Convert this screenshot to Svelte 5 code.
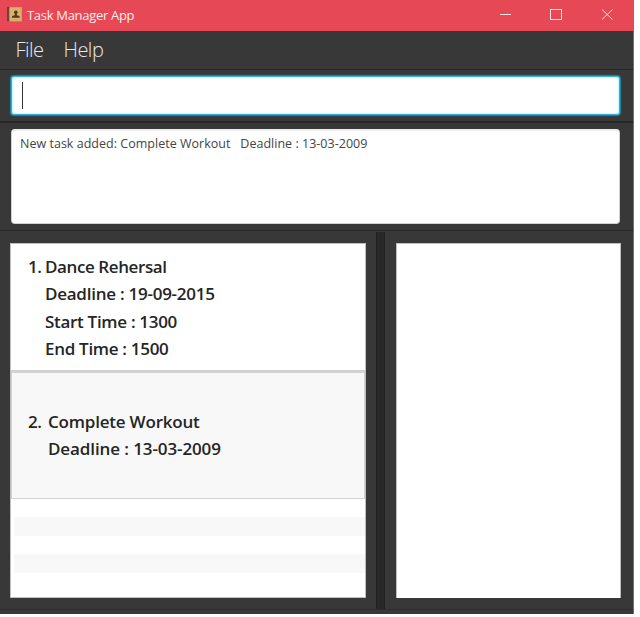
<script>
  const tasks = [
    { title: 'Dance Rehersal', details: ['Deadline : 19-09-2015', 'Start Time : 1300', 'End Time : 1500'] },
    { title: 'Complete Workout', details: ['Deadline : 13-03-2009'] }
  ];
</script>

<div class="window">
  <header>
    <svg class="logo" width="15" height="16" viewBox="0 0 15 16">
      <rect width="15" height="14.5" rx="1" fill="#d7a35c" />
      <rect width="2.5" height="14.5" fill="#684534" />
      <path d="M2.5 1H14V13.5H2.5Z" fill="#d8b16d" />
      <circle cx="8.8" cy="5.2" r="1.8" fill="#4d3b22" />
      <path d="M7.8 6H9.8V8.3L12.6 9V10.7H5V9L7.8 8.3Z" fill="#4d3b22" />
    </svg>
    <span class="app-title">Task Manager App</span>
    <svg class="controls" width="116" height="30" viewBox="0 0 116 30" fill="none" stroke="#ffe3e5" stroke-width="1">
      <path d="M0 14.5H11" />
      <rect x="50.5" y="9.5" width="11" height="10" />
      <path d="M102 9.5L112.5 19.5M112.5 9.5L102 19.5" />
    </svg>
  </header>
  <nav><span class="file">File</span><span class="help">Help</span></nav>
  <section class="command"><div class="input"><i></i></div></section>
  <section class="result"><div class="message"><span>New task added: Complete Workout &nbsp; Deadline : 13-03-2009</span></div></section>
  <main>
    <div class="left">
      <div class="list">
        {#each tasks as task, i}
          <article>
            <span class="number">{i + 1}.</span>
            <div class="lines">
              <div class="title">{task.title}</div>
              {#each task.details as line, j}<div class:deadline={j === 0}>{line}</div>{/each}
            </div>
          </article>
        {/each}
        <div class="stripes"></div>
      </div>
    </div>
    <div class="divider"></div>
    <div class="right"><div class="browser"></div></div>
  </main>
  <footer></footer>
</div>

<style>
  :global(body) { margin: 0; background: #fff; overflow: hidden; }
  .window { box-sizing: border-box; width: 634px; height: 614px; display: flex; flex-direction: column; background: #383838; border-right: 1px solid #b94d5c; font-family: 'Open Sans', 'Noto Sans', sans-serif; }
  header { height: 31px; flex: none; margin-right: -1px; display: flex; background: #e74856; color: #ffedee; }
  .logo { margin: 7px 0 0 7px; }
  .app-title { margin-left: 5px; font-size: 13px; line-height: 31px; width: 370px; letter-spacing: -0.3px; }
  .controls { margin-left: 103px; flex: none; }
  nav { box-sizing: border-box; height: 39px; flex: none; border-bottom: 1px solid #252525; display: flex; padding-left: 15.5px; font-size: 20px; font-weight: 300; line-height: 38px; letter-spacing: -0.5px; color: #e8e8e8; }
  .file { width: 48px; }
  .command { box-sizing: border-box; height: 53px; flex: none; padding: 6px 13px 6px 11px; border-bottom: 2px solid #262826; }
  .input { box-sizing: border-box; height: 39px; border: 1px solid #34b2dc; border-radius: 3px; background: #fff; box-shadow: 0 0 1px 1px #168bb0, inset 0 0 1px 1px #c6f1ff; padding: 5px 0 0 10px; }
  .input i { display: block; width: 1px; height: 27px; background: #333; }
  .result { box-sizing: border-box; height: 108px; flex: none; padding: 6px 13px 7px 11px; border-bottom: 1px solid #292929; }
  .message { box-sizing: border-box; height: 95px; background: #fff; border: 1px solid #d0d0d0; border-top: 2px solid #ededed; border-radius: 4px; padding: 2px 8px; font-size: 12.5px; line-height: 22px; color: #454545; white-space: nowrap; }
  .message span { letter-spacing: 0.02px; }
  main { height: 378px; flex: none; display: flex; }
  .left { width: 376px; padding: 12px 0 0 10px; box-sizing: border-box; }
  .list { box-sizing: border-box; width: 356px; height: 355px; border: 1px solid #bebebe; background: #fff; }
  article { box-sizing: border-box; height: 128px; display: flex; align-items: flex-start; padding: 9px 0 0 17px; border-bottom: 2px solid #d2d2d2; color: #252525; font-size: 17px; font-weight: 600; line-height: 27.3px; white-space: nowrap; }
  article:nth-child(2) { height: 127px; background: #f8f8f8; border: 1px solid #d2d2d2; padding: 35px 0 0 16px; }
  .number { width: 17px; letter-spacing: -0.5px; }
  article:nth-child(2) .number { width: 20px; }
  .lines { letter-spacing: -0.3px; }
  .title { letter-spacing: -0.4px; }
  .deadline { letter-spacing: -0.25px; }
  article:nth-child(2) .title { letter-spacing: -0.2px; }
  article:nth-child(2) .deadline { letter-spacing: -0.1px; }
  .stripes { height: 74px; margin-left: 3px; background: repeating-linear-gradient(#fff 0 18.5px, #f8f8f8 18.5px 37px); }
  .divider { box-sizing: border-box; width: 9px; margin-top: 1px; background: #282828; border: 1px solid #202020; border-width: 0 1px; }
  .right { flex: 1; padding: 12px 12px 0 11px; }
  .browser { box-sizing: border-box; height: 355px; background: #fff; border: 1px solid #bebebe; border-width: 1px 1px 0; }
  footer { height: 4px; border-top: 1px solid #2b2b2b; }
</style>
